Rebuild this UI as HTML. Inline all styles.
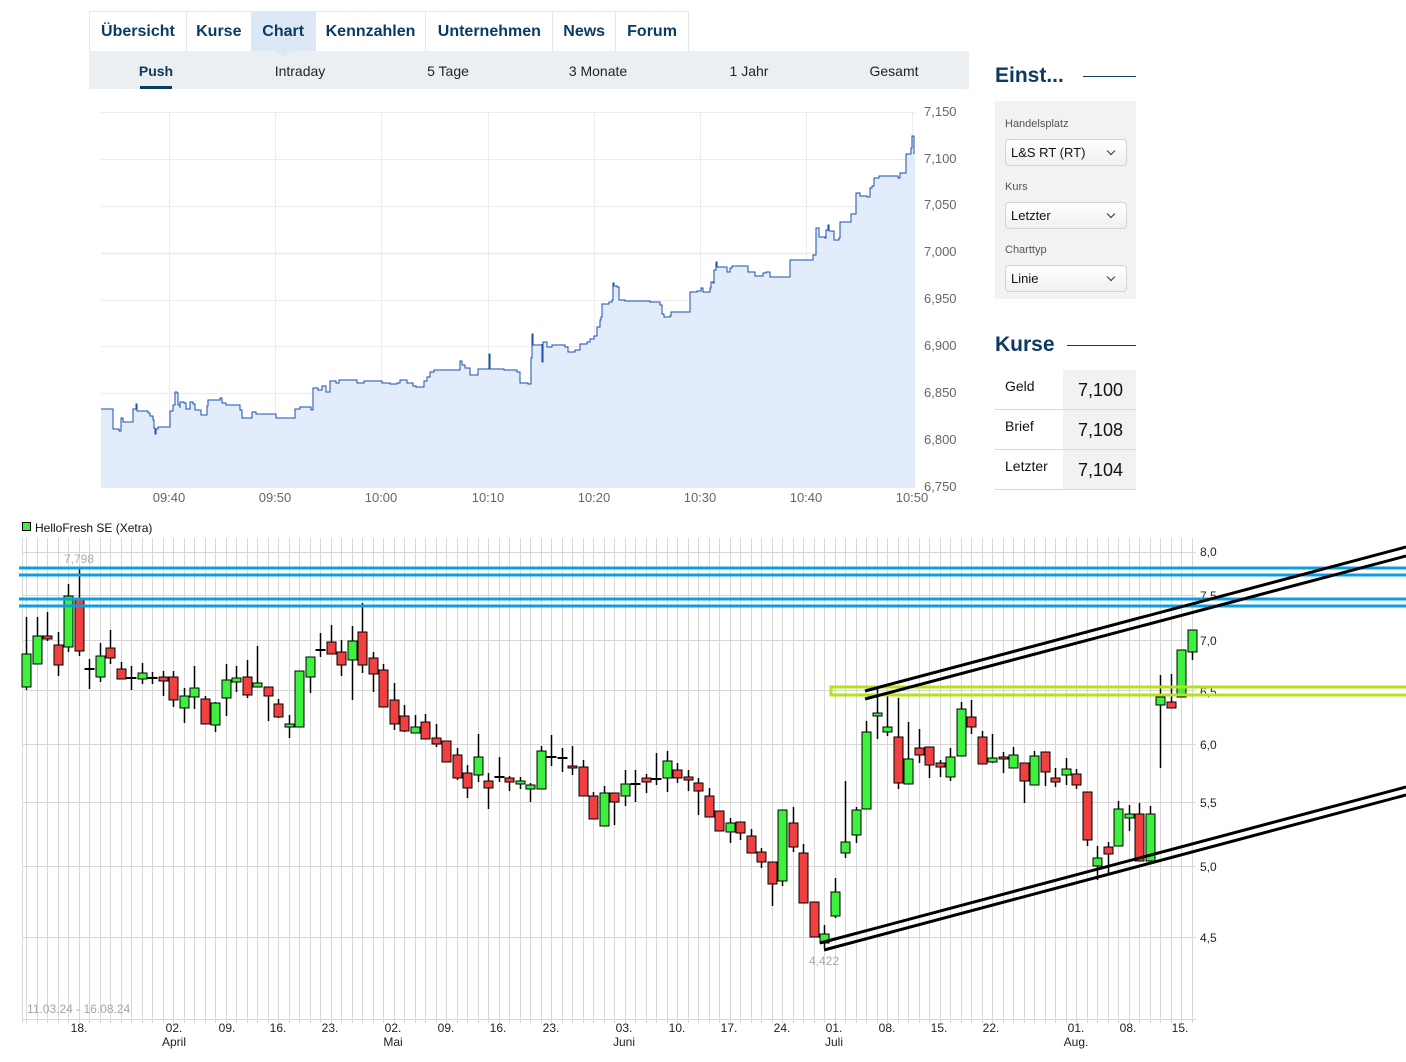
<!DOCTYPE html>
<html><head><meta charset="utf-8">
<style>
*{margin:0;padding:0;box-sizing:border-box}
body{width:1406px;height:1062px;background:#fff;font-family:"Liberation Sans",Arial,sans-serif;position:relative;overflow:hidden}
.abs{position:absolute}
.tabs{left:89px;top:11px;width:600px;height:40px;border:1px solid #e3e6ea;border-bottom:none;display:flex;background:#fff}
.tab{height:39px;line-height:39px;color:#0b3a63;font-weight:bold;font-size:16px;text-align:center;border-right:1px solid #e3e6ea}
.sub{left:89px;top:51px;width:880px;height:38px;background:#eceff2}
.si{position:absolute;top:0;line-height:40px;font-size:14px;color:#222;transform:translateX(-50%)}
.h{color:#0b3a63;font-weight:bold;font-size:21px}
.lbl{font-size:11px;color:#555;position:absolute;left:1005px}
.sel{position:absolute;left:1005px;width:122px;height:27px;border:1px solid #d4d4d4;border-radius:4px;background:linear-gradient(#fff,#f0f0f0);font-size:13px;line-height:26px;padding-left:5px;color:#111}
.sel:after{content:"";position:absolute;right:12px;top:8px;width:5px;height:5px;border-right:1.4px solid #333;border-bottom:1.4px solid #333;transform:rotate(45deg)}
.row{position:absolute;left:995px;width:141px;height:40px;border-bottom:1px solid #d5d9de}
.row .l{position:absolute;left:10px;top:8px;font-size:14px;color:#111}
.row .v{position:absolute;left:68px;top:0;width:73px;height:39px;background:#f2f2f2;font-size:18px;color:#111;padding-left:15px;line-height:41px}
svg text{font-family:"Liberation Sans",Arial,sans-serif}
</style></head><body>

<div class="abs tabs">
 <div class="tab" style="width:97px">Übersicht</div>
 <div class="tab" style="width:65px">Kurse</div>
 <div class="tab" style="width:64px;background:#dde8f7">Chart</div>
 <div class="tab" style="width:111px">Kennzahlen</div>
 <div class="tab" style="width:127px">Unternehmen</div>
 <div class="tab" style="width:63px">News</div>
 <div class="tab" style="width:72px;border-right:none">Forum</div>
</div>
<div class="abs sub">
 <div class="abs" style="left:187px;top:0;width:0;height:0;border-left:7px solid transparent;border-right:7px solid transparent;border-top:6px solid #dde8f7"></div>
 <div class="si" style="left:67px;font-weight:bold;color:#0b3a63">Push</div>
 <div class="abs" style="left:51px;top:35px;width:32px;height:3px;background:#0b3a63"></div>
 <div class="si" style="left:211px">Intraday</div>
 <div class="si" style="left:359px">5 Tage</div>
 <div class="si" style="left:509px">3 Monate</div>
 <div class="si" style="left:660px">1 Jahr</div>
 <div class="si" style="left:805px">Gesamt</div>
</div>

<div class="abs h" style="left:995px;top:64px">Einst...</div>
<div class="abs" style="left:1083px;top:76px;width:53px;height:1px;background:#0b3a63"></div>
<div class="abs" style="left:995px;top:101px;width:141px;height:198px;background:#f2f2f2"></div>
<div class="lbl" style="top:118px">Handelsplatz</div>
<div class="sel" style="top:139px">L&amp;S RT (RT)</div>
<div class="lbl" style="top:181px">Kurs</div>
<div class="sel" style="top:202px">Letzter</div>
<div class="lbl" style="top:244px">Charttyp</div>
<div class="sel" style="top:265px">Linie</div>

<div class="abs h" style="left:995px;top:333px">Kurse</div>
<div class="abs" style="left:1067px;top:345px;width:69px;height:1px;background:#0b3a63"></div>
<div class="row" style="top:370px"><div class="l">Geld</div><div class="v">7,100</div></div>
<div class="row" style="top:410px"><div class="l">Brief</div><div class="v">7,108</div></div>
<div class="row" style="top:450px"><div class="l">Letzter</div><div class="v">7,104</div></div>

<svg class="abs" style="left:0;top:0" width="1406" height="1062">
 <g stroke="#ececec" stroke-width="1">
  <line x1="101" y1="112.5" x2="916" y2="112.5"/><line x1="101" y1="159.5" x2="916" y2="159.5"/>
  <line x1="101" y1="206.5" x2="916" y2="206.5"/><line x1="101" y1="253.5" x2="916" y2="253.5" stroke-width="2"/>
  <line x1="101" y1="300.5" x2="916" y2="300.5"/><line x1="101" y1="346.5" x2="916" y2="346.5"/>
  <line x1="101" y1="393.5" x2="916" y2="393.5"/><line x1="101" y1="440.5" x2="916" y2="440.5"/>
  <line x1="169.5" y1="112" x2="169.5" y2="487"/><line x1="275.5" y1="112" x2="275.5" y2="487"/>
  <line x1="381.5" y1="112" x2="381.5" y2="487"/><line x1="488.5" y1="112" x2="488.5" y2="487"/>
  <line x1="594.5" y1="112" x2="594.5" y2="487"/><line x1="700.5" y1="112" x2="700.5" y2="487"/>
  <line x1="806.5" y1="112" x2="806.5" y2="487"/><line x1="912.5" y1="112" x2="912.5" y2="487"/>
 </g>
 <path id="ipl" fill="#dfeaf9" fill-opacity="0.9" stroke="none" d="M101,409 H113 V429 H119 V431 H121 V418 H123 V422 H133 V409 H136 V404 H137 V411 H148 V413 H150 V416 H153 V420 H154 V428 H155 V434 H156 V429 H158 V427 H170 V411 H173 V405 H175 V392 H177 V393 H178 V405 H180 V408 H180 V402 H184 V403 H186 V409 H190 V402 H193 V404 H195 V410 H201 V415 H207 V406 H208 V400 H220 V398 H222 V403 H226 V405 H240 V410 H242 V418 H252 V412 H256 V414 H276 V418 H295 V409 H300 V407 H302 V407 H311 V410 H313 V388 H318 V390 H322 V386 H326 V392 H330 V381 H336 V383 H339 V380 H357 V383 H364 V381 H382 V383 H390 V384 H397 V383 H400 V380 H407 V383 H413 V386 H416 V387 H424 V381 H427 V377 H430 V372 H434 V370 H460 V361 H462 V365 H465 V368 H470 V375 H478 V369 H485 V369 H489 V354 H490 V369 H504 V370 H517 V372 H520 V383 H528 V384 H531 V358 H532 V334 H533 V345 H542 V344 H542 V362 H543 V342 H547 V347 H552 V345 H565 V347 H568 V352 H575 V350 H580 V344 H587 V342 H590 V339 H594 V336 H597 V327 H600 V320 H601 V317 H602 V304 H609 V302 H612 V300 H613 V283 H614 V286 H617 V287 H619 V300 H625 V301 H650 V302 H657 V302 H660 V305 H662 V314 H664 V317 H670 V316 H671 V312 H690 V292 H697 V291 H701 V288 H703 V292 H710 V288 H711 V282 H713 V283 H714 V270 H716 V262 H717 V267 H726 V267 H727 V272 H730 V268 H732 V266 H748 V272 H755 V276 H763 V273 H766 V272 H770 V277 H778 V277 H790 V275 H790 V260 H810 V260 H813 V255 H816 V238 H816 V228 H819 V237 H825 V238 H826 V230 H828 V225 H829 V231 H834 V240 H839 V238 H840 V222 H851 V214 H856 V193 H860 V196 H867 V197 H870 V188 H872 V186 H874 V178 H879 V176 H891 V176 H898 V178 H900 V173 H905 V173 H906 V154 H909 V154 H911 V148 H912 V136 H914 V154 H915 V487 H101 Z"/>
 <path fill="none" stroke="#1a4fae" stroke-width="1" d="M101,409 H113 V429 H119 V431 H121 V418 H123 V422 H133 V409 H136 V404 H137 V411 H148 V413 H150 V416 H153 V420 H154 V428 H155 V434 H156 V429 H158 V427 H170 V411 H173 V405 H175 V392 H177 V393 H178 V405 H180 V408 H180 V402 H184 V403 H186 V409 H190 V402 H193 V404 H195 V410 H201 V415 H207 V406 H208 V400 H220 V398 H222 V403 H226 V405 H240 V410 H242 V418 H252 V412 H256 V414 H276 V418 H295 V409 H300 V407 H302 V407 H311 V410 H313 V388 H318 V390 H322 V386 H326 V392 H330 V381 H336 V383 H339 V380 H357 V383 H364 V381 H382 V383 H390 V384 H397 V383 H400 V380 H407 V383 H413 V386 H416 V387 H424 V381 H427 V377 H430 V372 H434 V370 H460 V361 H462 V365 H465 V368 H470 V375 H478 V369 H485 V369 H489 V354 H490 V369 H504 V370 H517 V372 H520 V383 H528 V384 H531 V358 H532 V334 H533 V345 H542 V344 H542 V362 H543 V342 H547 V347 H552 V345 H565 V347 H568 V352 H575 V350 H580 V344 H587 V342 H590 V339 H594 V336 H597 V327 H600 V320 H601 V317 H602 V304 H609 V302 H612 V300 H613 V283 H614 V286 H617 V287 H619 V300 H625 V301 H650 V302 H657 V302 H660 V305 H662 V314 H664 V317 H670 V316 H671 V312 H690 V292 H697 V291 H701 V288 H703 V292 H710 V288 H711 V282 H713 V283 H714 V270 H716 V262 H717 V267 H726 V267 H727 V272 H730 V268 H732 V266 H748 V272 H755 V276 H763 V273 H766 V272 H770 V277 H778 V277 H790 V275 H790 V260 H810 V260 H813 V255 H816 V238 H816 V228 H819 V237 H825 V238 H826 V230 H828 V225 H829 V231 H834 V240 H839 V238 H840 V222 H851 V214 H856 V193 H860 V196 H867 V197 H870 V188 H872 V186 H874 V178 H879 V176 H891 V176 H898 V178 H900 V173 H905 V173 H906 V154 H909 V154 H911 V148 H912 V136 H914 V154"/>
 <line x1="101" y1="487.5" x2="916" y2="487.5" stroke="#ececec"/>
 <g font-size="13" fill="#666">
  <text x="924" y="116">7,150</text><text x="924" y="163">7,100</text><text x="924" y="209">7,050</text>
  <text x="924" y="256">7,000</text><text x="924" y="303">6,950</text><text x="924" y="350">6,900</text>
  <text x="924" y="397">6,850</text><text x="924" y="444">6,800</text><text x="924" y="491">6,750</text>
 </g>
 <g font-size="13" fill="#666" text-anchor="middle">
  <text x="169" y="502">09:40</text><text x="275" y="502">09:50</text><text x="381" y="502">10:00</text>
  <text x="488" y="502">10:10</text><text x="594" y="502">10:20</text><text x="700" y="502">10:30</text>
  <text x="806" y="502">10:40</text><text x="912" y="502">10:50</text>
 </g>

 <rect x="22.5" y="522.5" width="8" height="8" fill="#3ef03e" stroke="#000"/>
 <text x="35" y="532" font-size="12" fill="#111">HelloFresh SE (Xetra)</text>
 <g id="grid" stroke="#d8d8d8" stroke-width="1"></g>
 <g stroke="#d8d8d8" stroke-width="1">
  <line x1="22" y1="552.5" x2="1196" y2="552.5"/><line x1="22" y1="595.5" x2="1196" y2="595.5"/>
  <line x1="22" y1="640.5" x2="1196" y2="640.5"/><line x1="22" y1="690.5" x2="1196" y2="690.5"/>
  <line x1="22" y1="744.5" x2="1196" y2="744.5"/><line x1="22" y1="802.5" x2="1196" y2="802.5"/>
  <line x1="22" y1="866.5" x2="1196" y2="866.5"/><line x1="22" y1="937.5" x2="1196" y2="937.5"/>
  <line x1="22" y1="1019.5" x2="1196" y2="1019.5"/>
 </g>
 <g font-size="12" fill="#222">
  <text x="1200" y="556">8,0</text><text x="1200" y="600">7,5</text><text x="1200" y="645">7,0</text>
  <text x="1200" y="696">6,5</text><text x="1200" y="749">6,0</text><text x="1200" y="807">5,5</text>
  <text x="1200" y="871">5,0</text><text x="1200" y="942">4,5</text>
 </g>
 <g font-size="12" fill="#222" text-anchor="middle">
  <text x="79" y="1032">18.</text>
  <text x="174" y="1032">02.</text><text x="174" y="1046">April</text>
  <text x="227" y="1032">09.</text><text x="278" y="1032">16.</text><text x="330" y="1032">23.</text>
  <text x="393" y="1032">02.</text><text x="393" y="1046">Mai</text>
  <text x="446" y="1032">09.</text><text x="498" y="1032">16.</text><text x="551" y="1032">23.</text>
  <text x="624" y="1032">03.</text><text x="624" y="1046">Juni</text>
  <text x="677" y="1032">10.</text><text x="729" y="1032">17.</text><text x="782" y="1032">24.</text>
  <text x="834" y="1032">01.</text><text x="834" y="1046">Juli</text>
  <text x="887" y="1032">08.</text><text x="939" y="1032">15.</text><text x="991" y="1032">22.</text>
  <text x="1076" y="1032">01.</text><text x="1076" y="1046">Aug.</text>
  <text x="1128" y="1032">08.</text><text x="1180" y="1032">15.</text>
 </g>
 <text x="64" y="563" font-size="12" fill="#aaa">7,798</text>
 <text x="809" y="965" font-size="12" fill="#aaa">4,422</text>
 <text x="27" y="1013" font-size="12" fill="#b0a29a">11.03.24 - 16.08.24</text>
 <g id="candles"></g>
 <g stroke="#09a0e3" stroke-width="3">
  <line x1="19" y1="568" x2="1406" y2="568"/><line x1="19" y1="575" x2="1406" y2="575"/>
  <line x1="19" y1="599" x2="1406" y2="599"/><line x1="19" y1="606" x2="1406" y2="606"/>
 </g>
 <rect x="831" y="687" width="580" height="8" fill="none" stroke="#b4e31c" stroke-width="3"/>
 <g stroke="#000" stroke-width="3">
  <line x1="865" y1="691" x2="1406" y2="547"/><line x1="865" y1="699" x2="1406" y2="556"/>
  <line x1="820" y1="943" x2="1406" y2="787"/><line x1="824" y1="950" x2="1406" y2="795"/>
 </g>
</svg>
<script>
var D=[['g',654,687,617,690],['g',636,664,617,664],['r',636,639,612,641],['r',645,665,632,676],['g',596,647,584,652],['r',600,651,569,656],['d',669,669,659,689],['g',656,677,643,682],['r',648,658,630,664],['r',669,679,662,679],['d',678,678,666,690],['g',673,679,663,684],['d',678,678,672,684],['r',677,681,671,696],['r',677,700,671,707],['g',696,708,688,723],['g',688,697,666,709],['r',699,724,696,724],['g',703,725,702,732],['g',680,698,664,716],['g',678,682,666,692],['r',677,695,660,698],['g',683,687,646,687],['r',687,696,687,721],['r',704,717,699,718],['g',724,727,715,738],['g',671,727,671,727],['g',657,677,657,693],['d',650,650,633,657],['r',642,654,625,654],['r',652,665,640,676],['g',641,660,626,700],['r',632,665,603,673],['r',658,674,652,692],['r',670,707,664,707],['r',700,724,683,730],['r',716,731,705,732],['g',727,733,715,733],['r',722,739,714,739],['r',738,744,724,747],['r',741,762,741,762],['r',755,778,748,780],['r',773,788,765,798],['g',757,775,734,782],['r',781,788,773,809],['d',777,777,757,782],['r',778,782,776,791],['g',781,784,777,789],['g',785,789,783,802],['g',751,789,746,789],['d',757,757,735,766],['d',758,758,748,772],['r',766,768,746,775],['r',767,796,760,796],['r',796,819,792,819],['g',793,826,786,826],['r',793,802,793,825],['g',784,796,770,806],['d',784,784,770,802],['r',778,782,774,793],['d',779,779,753,785],['g',761,778,751,792],['r',770,778,763,783],['r',777,780,770,791],['r',783,791,778,815],['r',796,817,788,817],['r',811,831,811,831],['g',823,832,818,843],['r',822,833,822,840],['r',836,853,829,853],['r',852,862,848,868],['r',862,884,862,906],['g',810,881,810,886],['r',823,847,807,852],['r',853,903,844,903],['r',902,937,902,937],['g',934,943,925,948],['g',892,916,878,918],['g',842,853,781,858],['g',810,835,807,843],['g',732,809,721,809],['g',713,716,689,739],['g',727,732,693,736],['r',737,783,698,789],['g',759,784,722,784],['r',748,755,729,763],['r',747,765,747,778],['r',763,767,760,777],['g',757,777,748,781],['g',709,756,702,756],['r',717,727,700,734],['r',737,764,731,764],['g',758,762,734,763],['r',757,759,752,773],['g',755,768,747,768],['r',763,781,763,803],['g',756,785,751,785],['r',752,772,752,786],['r',778,782,768,787],['g',769,775,758,785],['r',774,785,769,789],['r',792,840,792,846],['g',858,866,846,880],['r',847,854,842,873],['g',809,846,801,846],['g',814,818,805,831],['r',814,861,803,861],['g',814,861,806,861],['g',697,705,675,768],['r',702,708,674,708],['g',650,697,650,697],['g',630,652,630,660]];
var ns='http://www.w3.org/2000/svg',G=document.getElementById('grid'),C=document.getElementById('candles');
function el(p,t,a){var e=document.createElementNS(ns,t);for(var k in a)e.setAttribute(k,a[k]);p.appendChild(e);return e}
el(G,'line',{x1:22.5,y1:538,x2:22.5,y2:1023});
for(var i=0;i<112;i++){var x=Math.round(26+10.5*i)+0.5;el(G,'line',{x1:x,y1:538,x2:x,y2:1023});}
D.forEach(function(d,i){var x=Math.round(26+10.5*i)+0.5;
 el(C,'line',{x1:x,y1:d[3],x2:x,y2:d[4],stroke:'#000','stroke-width':1.5});
 if(d[0]=='d'){el(C,'line',{x1:x-5,y1:d[1],x2:x+5,y2:d[1],stroke:'#000','stroke-width':2});}
 else el(C,'rect',{x:x-4.5,y:d[1],width:9,height:Math.max(2,d[2]-d[1]),fill:d[0]=='g'?'#3ef03e':'#f04040',stroke:'#000','stroke-width':1});
});
</script>
</body></html>
